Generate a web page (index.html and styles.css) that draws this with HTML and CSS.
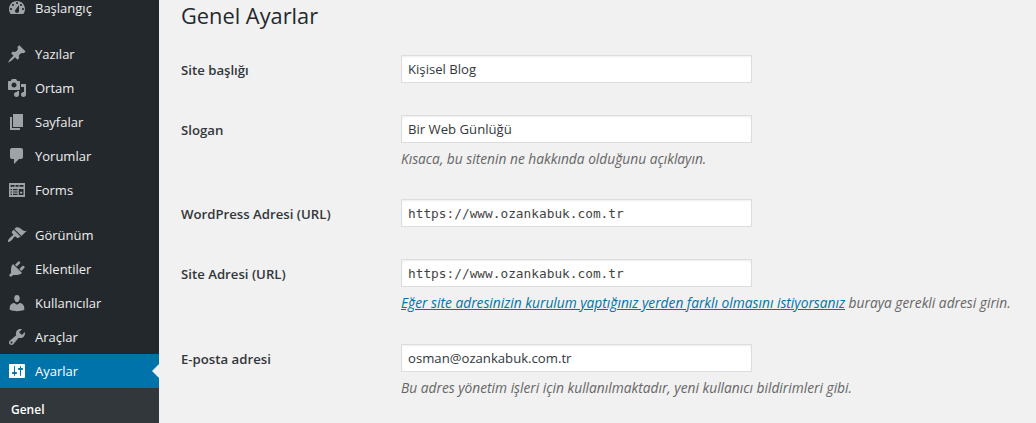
FILE: index.html
```html
<!DOCTYPE html>
<html lang="tr">
<head>
<meta charset="utf-8">
<title>Genel Ayarlar</title>
<link rel="stylesheet" href="styles.css">
</head>
<body>
<div class="app">
  <nav class="side">
    <ul class="menu">
      <li class="item"><svg class="ico" viewBox="0 0 20 20"><path fill-rule="evenodd" d="M3.76 16h12.48c1.1-1.37 1.76-3.11 1.76-5 0-4.42-3.58-8-8-8s-8 3.58-8 8c0 1.89.66 3.63 1.76 5zM10 4c.55 0 1 .45 1 1s-.45 1-1 1-1-.45-1-1 .45-1 1-1zM6 6c.55 0 1 .45 1 1s-.45 1-1 1-1-.45-1-1 .45-1 1-1zm8 0c.55 0 1 .45 1 1s-.45 1-1 1-1-.45-1-1 .45-1 1-1zm-5.37 5.55L12 7v6c0 1.1-.9 2-2 2s-2-.9-2-2c0-.57.24-1.08.63-1.45zM4 10c.55 0 1 .45 1 1s-.45 1-1 1-1-.45-1-1 .45-1 1-1zm12 0c.55 0 1 .45 1 1s-.45 1-1 1-1-.45-1-1 .45-1 1-1z"/></svg><span>Başlangıç</span></li>
      <li class="item gap"><svg class="ico" viewBox="0 0 20 20"><path d="M10.44 3.02l1.82-1.82 6.36 6.35-1.83 1.82c-1.05-.68-2.48-.57-3.41.36l-.75.75c-.92.93-1.04 2.35-.35 3.41l-1.83 1.82-2.41-2.41-2.8 2.79c-.42.42-3.38 2.71-3.8 2.29s1.86-3.39 2.28-3.81l2.79-2.79L4.1 9.36l1.83-1.82c1.05.69 2.48.57 3.41-.36l.75-.75c.93-.92 1.05-2.35.35-3.41z"/></svg><span>Yazılar</span></li>
      <li class="item"><svg class="ico" viewBox="0 0 20 20"><path fill-rule="evenodd" d="M13 11V4c0-.55-.45-1-1-1h-1.67L9 1H5L3.67 3H2c-.55 0-1 .45-1 1v7c0 .55.45 1 1 1h10c.55 0 1-.45 1-1zM7 4.5c1.38 0 2.5 1.12 2.5 2.5S8.38 9.5 7 9.5 4.5 8.38 4.5 7 5.62 4.5 7 4.5zM14 6h5v10.5c0 1.38-1.12 2.5-2.5 2.5S14 17.88 14 16.5s1.12-2.5 2.5-2.5c.17 0 .34.02.5.05V9h-3V6zm-4 8.05V13h2v3.5c0 1.38-1.12 2.5-2.5 2.5S7 17.88 7 16.5 8.12 14 9.5 14c.17 0 .34.02.5.05z"/></svg><span>Ortam</span></li>
      <li class="item"><svg class="ico" viewBox="0 0 20 20"><path d="M6 15V2h10v13H6zm-1 1h8v2H3V5h2v11z"/></svg><span>Sayfalar</span></li>
      <li class="item"><svg class="ico" viewBox="0 0 20 20"><path d="M5 2h9c1.1 0 2 .9 2 2v7c0 1.1-.9 2-2 2h-2l-5 5v-5H5c-1.1 0-2-.9-2-2V4c0-1.1.9-2 2-2z"/></svg><span>Yorumlar</span></li>
      <li class="item"><svg class="ico" viewBox="0 0 20 20"><path fill-rule="evenodd" d="M2 3h16v14H2zM3.5 5v1.8h4V5zM8.5 5v1.8h3V5zM12.5 5v1.8h4V5zM3.5 9v1.2h1.5V9zM6 9v1.2h4.5V9zM3.5 11.4v1.2h1.5v-1.2zM6 11.4v1.2h4.5v-1.2zM3.5 13.8v1.2h1.5v-1.2zM6 13.8v1.2h4.5v-1.2zM11.8 9v6h4.7V9zM13 11.8h2.3v1.8H13z"/></svg><span>Forms</span></li>
      <li class="item gap-large"><svg class="ico" viewBox="0 0 20 20"><path fill-rule="evenodd" d="M14.48 11.06L7.41 3.99l1.5-1.5c.5-.56 2.3-.47 3.51.32 1.21.8 1.43 1.28 2.91 2.1 1.18.64 2.45 1.26 4.45.85zm-.71.71L6.7 4.7 4.93 6.47c-.39.39-.39 1.02 0 1.41l1.06 1.06c.39.39.39 1.03 0 1.42-.6.6-1.43 1.11-2.21 1.69-.35.26-.7.53-1.01.84-1.35 1.34-2.4 3.07-1.7 3.77.7.7 2.43-.35 3.77-1.7.31-.31.58-.66.84-1.01.58-.78 1.09-1.61 1.69-2.21.39-.39 1.03-.39 1.42 0l1.06 1.06c.39.39 1.02.39 1.41 0z"/></svg><span>Görünüm</span></li>
      <li class="item"><svg class="ico" viewBox="0 0 20 20"><path d="M13.11 4.36L9.87 7.6 8 5.73l3.24-3.24c.35-.34 1.05-.2 1.56.32.52.51.66 1.21.31 1.55zm-8 1.77l.91-1.12 9.01 9.01-1.19.84c-.71.71-2.63 1.16-3.82 1.16H6.14L4.9 17.26c-.59.59-1.54.59-2.12 0-.59-.58-.59-1.53 0-2.12l1.24-1.24v-3.88c0-1.13.4-3.19 1.09-3.89zm7.26 3.97l3.24-3.24c.34-.35 1.04-.21 1.55.31.52.51.66 1.21.31 1.55l-3.24 3.25z"/></svg><span>Eklentiler</span></li>
      <li class="item"><svg class="ico" viewBox="0 0 20 20"><path d="M10 9.25c-2.27 0-2.73-3.44-2.73-3.44C7 4.02 7.82 2 9.97 2c2.16 0 2.98 2.02 2.71 3.81 0 0-.41 3.44-2.68 3.44zm0 2.57L12.72 10c2.39 0 4.52 2.33 4.52 4.53v2.49s-3.65 1.13-7.24 1.13c-3.65 0-7.24-1.13-7.24-1.13v-2.49c0-2.25 1.94-4.48 4.47-4.48z"/></svg><span>Kullanıcılar</span></li>
      <li class="item"><svg class="ico" viewBox="0 0 20 20"><path fill-rule="evenodd" d="M16.68 9.77c-1.34 1.34-3.3 1.67-4.95.99l-5.41 6.52c-.99.99-2.59.99-3.58 0s-.99-2.59 0-3.57l6.52-5.42c-.68-1.65-.35-3.61.99-4.95 1.28-1.28 3.12-1.62 4.72-1.06l-2.89 2.89 2.82 2.82 2.86-2.87c.53 1.58.18 3.39-1.08 4.65zM3.81 16.21c.4.39 1.04.39 1.43 0 .4-.4.4-1.04 0-1.43-.39-.4-1.03-.4-1.43 0-.39.39-.39 1.03 0 1.43z"/></svg><span>Araçlar</span></li>
      <li class="item active"><svg class="ico" viewBox="0 0 20 20"><path fill-rule="evenodd" d="M18 16V4c0-.55-.45-1-1-1H3c-.55 0-1 .45-1 1v12c0 .55.45 1 1 1h14c.55 0 1-.45 1-1zM8 11h1c.55 0 1 .45 1 1s-.45 1-1 1H8v1.5c0 .28-.22.5-.5.5s-.5-.22-.5-.5V13H6c-.55 0-1-.45-1-1s.45-1 1-1h1V5.5c0-.28.22-.5.5-.5s.5.22.5.5V11zm5-2h-1c-.55 0-1-.45-1-1s.45-1 1-1h1V5.5c0-.28.22-.5.5-.5s.5.22.5.5V7h1c.55 0 1 .45 1 1s-.45 1-1 1h-1v5.5c0 .28-.22.5-.5.5s-.5-.22-.5-.5V9z"/></svg><span>Ayarlar</span></li>
    </ul>
    <div class="submenu"><span class="sub-current">Genel</span></div>
  </nav>
  <main class="main">
    <h1 class="title">Genel Ayarlar</h1>
    <form class="form">
      <div class="row">
        <label class="label">Site başlığı</label>
        <div class="field"><input class="input" type="text" value="Kişisel Blog"></div>
      </div>
      <div class="row row-desc">
        <label class="label">Slogan</label>
        <div class="field"><input class="input" type="text" value="Bir Web Günlüğü">
          <p class="desc">Kısaca, bu sitenin ne hakkında olduğunu açıklayın.</p></div>
      </div>
      <div class="row">
        <label class="label">WordPress Adresi (URL)</label>
        <div class="field"><input class="input mono" type="text" value="https://www.ozankabuk.com.tr"></div>
      </div>
      <div class="row row-desc-long">
        <label class="label">Site Adresi (URL)</label>
        <div class="field"><input class="input mono" type="text" value="https://www.ozankabuk.com.tr">
          <p class="desc"><a class="link" href="#">Eğer site adresinizin kurulum yaptığınız yerden farklı olmasını istiyorsanız</a> buraya gerekli adresi girin.</p></div>
      </div>
      <div class="row">
        <label class="label">E-posta adresi</label>
        <div class="field"><input class="input" type="text" value="osman@ozankabuk.com.tr">
          <p class="desc">Bu adres yönetim işleri için kullanılmaktadır, yeni kullanıcı bildirimleri gibi.</p></div>
      </div>
    </form>
  </main>
</div>
</body>
</html>
```
FILE: styles.css
```css
* { box-sizing: border-box; }
html, body { margin: 0; padding: 0; height: 423px; overflow: hidden; background: #f1f1f1; }
body { font-family: "Open Sans", "Noto Sans", sans-serif; font-size: 13px; color: #23282d; }
.app { display: flex; height: 423px; overflow: hidden; }
.side { flex: 0 0 159px; background: #23282d; display: flex; flex-direction: column; margin-top: -9px; height: 432px; }
.menu { list-style: none; margin: 0; padding: 0; }
.item { display: flex; align-items: center; height: 34px; padding-left: 7px; gap: 8px; color: #eee; font-size: 13px; position: relative; }
.gap { margin-top: 12px; }
.gap-large { margin-top: 11px; }
.ico { width: 20px; height: 20px; fill: #9ea3a8; flex: none; }
.active { background: #0073aa; color: #fff; }
.active .ico { fill: #fff; }
.active::after { content: ""; position: absolute; right: 0; top: 10px; border: 7px solid transparent; border-right-color: #f1f1f1; border-left-width: 0; }
.submenu { flex: 1; background: #32373c; padding: 12px 0 0 11px; }
.sub-current { color: #fff; font-weight: 600; font-size: 12px; }
.main { flex: 1; padding: 0 0 0 22px; min-width: 0; }
.title { margin: 0; height: 55px; font-size: 21.8px; font-weight: 400; line-height: 31px; color: #23282d; }
.form { display: flex; flex-direction: column; }
.row { display: flex; height: 60px; }
.row-desc { height: 84px; }
.row-desc-long { height: 85px; }
.label { flex: 0 0 220px; font-weight: 600; font-size: 13.2px; line-height: 30px; color: #32373c; }
.field { flex: 1; min-width: 0; }
.input { display: block; width: 351px; height: 28px; border: 1px solid #ddd; background: #fff; padding: 0 6px; margin: 0; font: 13.15px "Open Sans", sans-serif; color: #32373c; box-shadow: inset 0 1px 2px rgba(0,0,0,.07); outline: none; }
.mono { font-family: "DejaVu Sans Mono", monospace; font-size: 12.8px; color: #444; }
.desc { margin: 4px 0 0; font-size: 13.75px; line-height: 23px; font-style: italic; color: #666; white-space: nowrap; }
.link { color: #0073aa; text-decoration: underline; }
```
